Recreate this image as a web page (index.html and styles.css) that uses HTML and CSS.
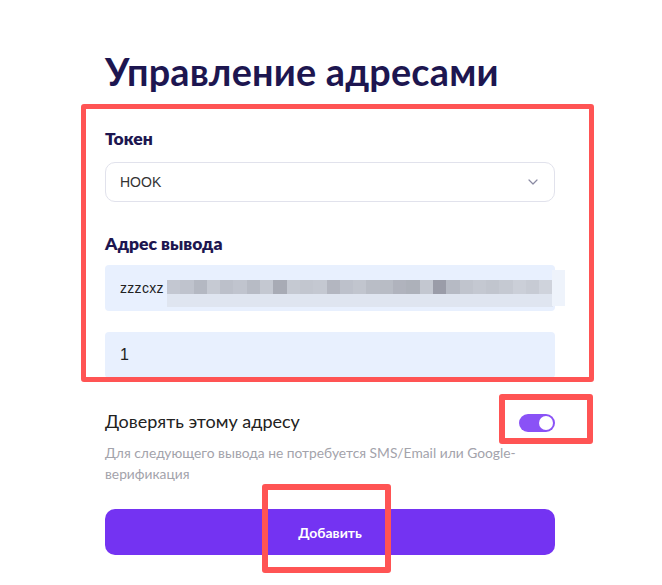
FILE: index.html
```html
<!DOCTYPE html>
<html lang="ru">
<head>
  <meta charset="UTF-8" />
  <meta name="viewport" content="width=device-width, initial-scale=1.0" />
  <title>Управление адресами</title>
  <link rel="stylesheet" href="styles.css">
</head>
<body>
  <div class="page">
    <h1>Управление адресами</h1>

    <div class="field">
      <div class="label">Токен</div>
      <div class="select">
        <span>HOOK</span>
        <svg class="chevron" width="10" height="6" viewBox="0 0 10 6"><path d="M1 1l4 4 4-4" fill="none" stroke="#8a8aa3" stroke-width="1.2" stroke-linecap="round" stroke-linejoin="round"/></svg>
      </div>
    </div>

    <div class="field field-address">
      <div class="label">Адрес вывода</div>
      <div class="input address">
        <span>zzzcxz</span>
        <div class="blur" id="blur"></div>
      </div>
      <div class="input memo">1</div>
    </div>

    <div class="trust">
      <span>Доверять этому адресу</span>
      <div class="toggle"><div class="knob"></div></div>
    </div>
    <p class="hint">Для следующего вывода не потребуется SMS/Email или Google-верификация</p>

    <button class="submit">Добавить</button>
  </div>

  <!-- пометки на скриншоте -->
  <div class="mark mark-form"></div>
  <div class="mark mark-toggle"></div>
  <div class="mark mark-button"></div>

  <script>
    // размытые квадраты поверх адреса
    const shades = ['#c3c7d1','#bfc3cd','#b4b8c2','#c6cad3','#bcc0ca','#c0c4ce','#b7bbc5','#c4c8d1','#a8abb5','#c5c9d2',
                    '#c2c6cf','#c4c8d1','#b3b6c0','#bdc1cb','#c1c5ce','#b9bdc6','#b8bcc5','#b0b3bd','#adb1ba','#c3c7d0',
                    '#9a9ca8','#b6bac4','#c0c4cd','#c4c8d1','#c1c5ce','#c5c9d2','#cbcfd8','#c7cbd4','#cfd3dc'];
    const blurBox = document.getElementById('blur');
    let upperRow = '', lowerRow = '';
    for (const c of shades) {
      upperRow += `<i style="background:${c}"></i>`;
      lowerRow += '<i></i>';
    }
    blurBox.innerHTML = `<div class="row">${upperRow}</div><div class="row light">${lowerRow}</div>`;
  </script>
</body>
</html>
```

FILE: styles.css
```css
body { margin: 0; background: #fff; font-family: "Lato", "Noto Sans", sans-serif; }
.page { width: 450px; margin-left: 105px; padding-top: 50px; }
h1 { margin: 0 0 34px; font-size: 37.8px; line-height: 44px; font-weight: 700; color: #1d1650; letter-spacing: 0.2px; }
.label { font-size: 17.5px; line-height: 22px; font-weight: 800; color: #1d1650; margin-bottom: 12px; }
.field-address { margin-top: 31px; }
.field-address .label { margin-bottom: 10px; }
.select { box-sizing: border-box; height: 40px; border: 1px solid #e1e2ec; border-radius: 10px; display: flex; align-items: center; justify-content: space-between; padding: 0 16px 0 14px; font-family: "Liberation Sans", Arial, sans-serif; font-size: 14px; color: #333; }
.input { box-sizing: border-box; height: 46px; background: #e8f0fe; border-radius: 4px; display: flex; align-items: center; padding: 0 15px; font-family: "Liberation Sans", Arial, sans-serif; color: #222; position: relative; }
.address { font-size: 14px; letter-spacing: 0.3px; }
.memo { margin-top: 21px; font-size: 16px; }
.blur { position: absolute; left: 62px; top: 15px; }
.blur .row { display: flex; }
.blur i { display: block; width: 13.3px; height: 14px; }
.blur .light i { background: #dfe5f0; height: 13px; }
.blur::after { content: ""; position: absolute; left: 385px; top: -10px; width: 13px; height: 36px; background: #eef3fb; }
.trust { margin-top: 32px; display: flex; align-items: center; justify-content: space-between; font-size: 18px; color: #222; line-height: 22px; }
.toggle { width: 36px; height: 18px; border-radius: 9px; background: #8a52f6; display: flex; align-items: center; justify-content: flex-end; padding: 0 2px; box-sizing: border-box; margin-top: 4px; }
.knob { width: 14px; height: 14px; border-radius: 50%; background: #fff; }
.hint { margin: 10px 0 0; font-size: 13.8px; line-height: 21px; color: #a3a3ab; width: 440px; }
.submit { display: block; width: 100%; height: 46px; margin-top: 25px; border: none; border-radius: 10px; background: #7433f2; color: #fff; font-family: "Lato", sans-serif; font-size: 14px; font-weight: 700; cursor: pointer; }
.mark { position: absolute; box-sizing: border-box; border: 5px solid #ff5454; border-radius: 3px; }
.mark-form { left: 81px; top: 104px; width: 513px; height: 278px; }
.mark-toggle { left: 499px; top: 394px; width: 94px; height: 50px; border-width: 6px; }
.mark-button { left: 262px; top: 484px; width: 129px; height: 89px; border-width: 6px; }
```
